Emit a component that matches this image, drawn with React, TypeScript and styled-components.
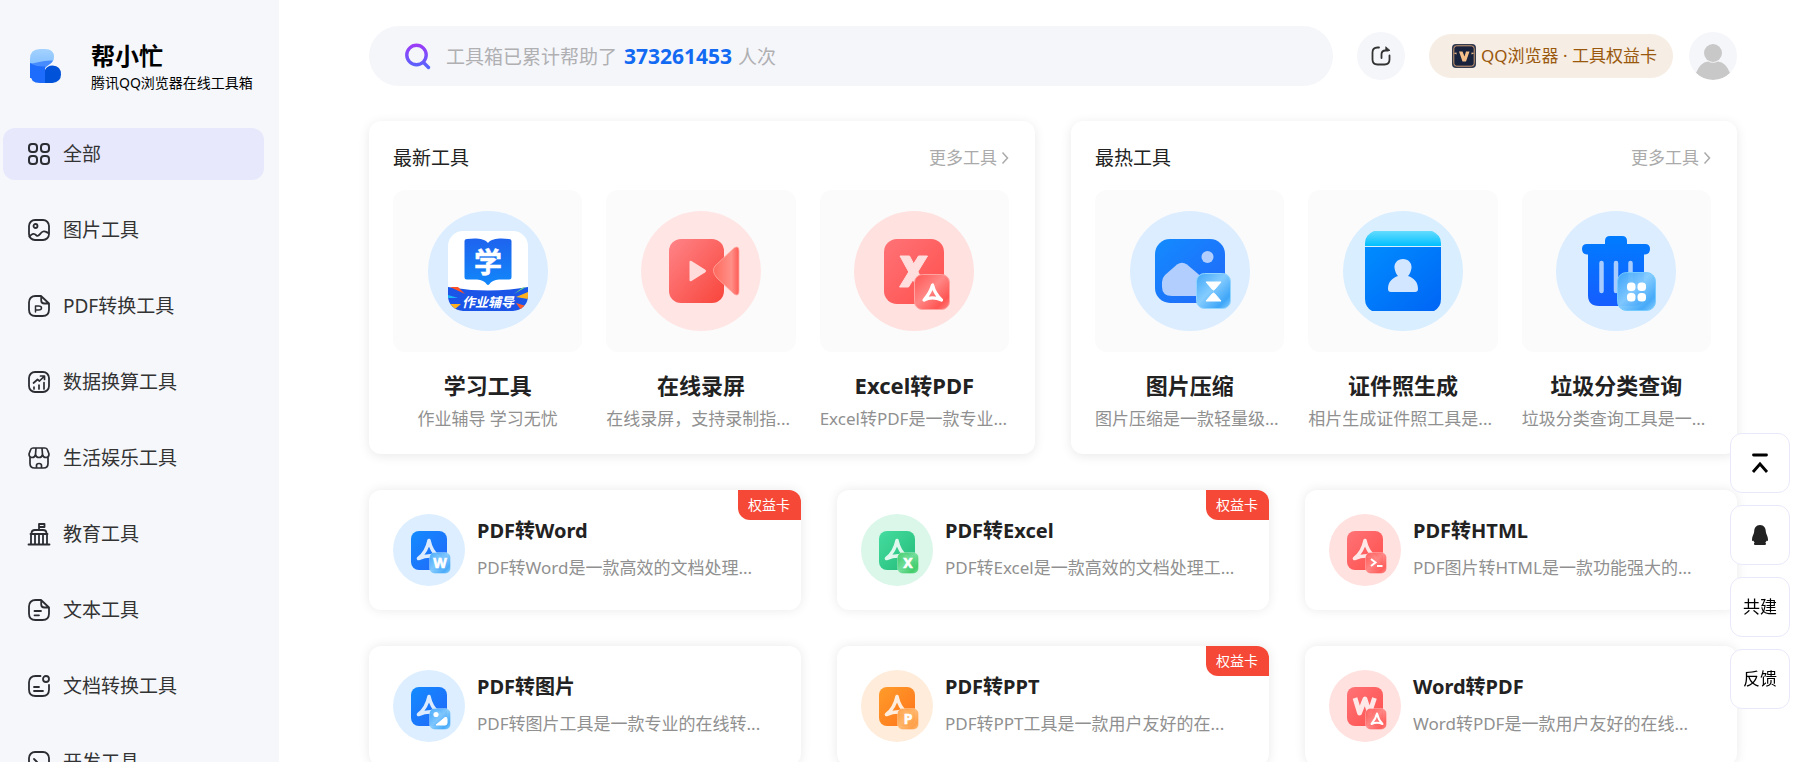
import React from "react";
import styled, { createGlobalStyle } from "styled-components";

const GlobalStyle = createGlobalStyle`
  * { box-sizing: border-box; }
  html, body { margin: 0; background: #fff; }
  body, button, input {
    font-family: "Noto Sans", "Noto Sans CJK SC", sans-serif;
    color: #222;
  }
  button { border: 0; padding: 0; background: none; cursor: pointer; }
  a { color: inherit; text-decoration: none; }
  h1, h2, h3, p, ul { margin: 0; padding: 0; }
  ul { list-style: none; }
  svg { display: block; flex: none; }
`;

const Page = styled.div`
  display: flex;
  height: 100vh;
  overflow: hidden;
`;

/* ---------- Sidebar ---------- */

const Sidebar = styled.aside`
  flex: 0 0 279px;
  background: #f5f7fb;
  overflow-y: auto;
  scrollbar-width: none;
`;

const Brand = styled.a`
  display: flex;
  align-items: center;
  gap: 28px;
  height: 128px;
  padding: 4px 0 0 28px;
  color: #000;
`;

const BrandText = styled.div`
  padding-top: 4px;
`;

const BrandName = styled.h1`
  font-size: 24px;
  line-height: 30px;
  font-weight: 700;
`;

const BrandSub = styled.p`
  font-size: 14px;
  line-height: 24px;
  white-space: nowrap;
`;

const NavList = styled.ul`
  display: flex;
  flex-direction: column;
  gap: 24px;
  padding: 0 15px 0 3px;
`;

const NavItem = styled.a<{ $active?: boolean }>`
  display: flex;
  align-items: center;
  gap: 12px;
  height: 52px;
  padding: 0 24px;
  border-radius: 12px;
  background: ${(p) => (p.$active ? "#e8e8fd" : "transparent")};
  color: #333;
  font-size: 19px;
  line-height: 28px;
`;

const LineIcon = styled.svg`
  width: 24px;
  height: 24px;
  fill: none;
  stroke: #2b2d33;
  stroke-width: 2;
  stroke-linecap: round;
  stroke-linejoin: round;
`;

/* ---------- Top bar ---------- */

const Main = styled.main`
  flex: 1;
  min-width: 0;
  padding: 26px 63px 36px 90px;
  overflow-y: auto;
  scrollbar-width: none;
`;

const TopBar = styled.header`
  display: flex;
  align-items: center;
  gap: 24px;
  margin-bottom: 35px;
`;

const SearchBox = styled.label`
  position: relative;
  flex: 1;
  display: flex;
  align-items: center;
  gap: 14px;
  height: 60px;
  padding: 0 35px;
  border-radius: 30px;
  background: #f5f6fa;
`;

const SearchInput = styled.input`
  position: absolute;
  inset: 0;
  width: 100%;
  padding: 0 78px;
  border: 0;
  border-radius: 30px;
  background: transparent;
  font-size: 19px;
  outline: none;
`;

const SearchHint = styled.span`
  font-size: 19px;
  line-height: 28px;
  color: #b0b0b3;
  white-space: pre;
`;

const Count = styled.strong`
  margin: 0 1px 0 2px;
  font-size: 21px;
  font-weight: 700;
  color: #1269f2;
`;

const RoundButton = styled.button`
  display: flex;
  align-items: center;
  justify-content: center;
  flex: none;
  width: 48px;
  height: 48px;
  border-radius: 50%;
  background: #f5f6fa;
  overflow: hidden;
`;

const Account = styled.div`
  display: flex;
  align-items: center;
  gap: 16px;
`;

const CardPill = styled.a`
  display: flex;
  align-items: center;
  gap: 5px;
  height: 44px;
  padding: 0 16px 0 23px;
  border-radius: 22px;
  background: #f6ede4;
  color: #99580c;
  font-size: 17px;
  line-height: 24px;
  white-space: nowrap;
`;

/* ---------- Cards ---------- */

const Panels = styled.div`
  display: grid;
  grid-template-columns: repeat(2, minmax(0, 1fr));
  gap: 36px;
  margin-bottom: 36px;
`;

const Panel = styled.section`
  padding: 22px 26px 20px 24px;
  border-radius: 12px;
  background: #fff;
  box-shadow: 0 2px 12px rgba(0, 0, 0, 0.09);
`;

const PanelHead = styled.div`
  display: flex;
  align-items: center;
  justify-content: space-between;
  margin-bottom: 17px;
`;

const PanelTitle = styled.h2`
  font-size: 19px;
  line-height: 30px;
  font-weight: 400;
`;

const MoreLink = styled.a`
  display: flex;
  align-items: center;
  gap: 4px;
  font-size: 17px;
  line-height: 24px;
  color: #aaa;
`;

const Tiles = styled.div`
  display: grid;
  grid-template-columns: repeat(3, minmax(0, 1fr));
  gap: 24px;
`;

const Tile = styled.a`
  display: block;
`;

const TileArt = styled.div`
  display: flex;
  align-items: center;
  justify-content: center;
  height: 162px;
  margin-bottom: 17px;
  border-radius: 12px;
  background: #fbfbfc;
`;

const TileTitle = styled.h3`
  margin-bottom: 3px;
  font-size: 22px;
  line-height: 32px;
  font-weight: 700;
  text-align: center;
`;

const Desc = styled.p<{ $centered?: boolean }>`
  font-size: 17px;
  line-height: 30px;
  color: #909090;
  white-space: nowrap;
  text-align: ${(p) => (p.$centered ? "center" : "left")};
`;

const Cards = styled.div`
  display: grid;
  grid-template-columns: repeat(3, minmax(0, 1fr));
  gap: 36px;
`;

const Card = styled.a`
  position: relative;
  display: flex;
  align-items: center;
  gap: 12px;
  height: 120px;
  padding: 0 24px;
  border-radius: 12px;
  background: #fff;
  box-shadow: 0 0 12px rgba(0, 0, 0, 0.09);
`;

const CardText = styled.div`
  display: flex;
  flex-direction: column;
  gap: 8px;
  min-width: 0;
`;

const CardTitle = styled.h3`
  font-size: 20px;
  line-height: 28px;
  font-weight: 700;
`;

const Badge = styled.span`
  position: absolute;
  top: 0;
  right: 0;
  padding: 0 11px 0 10px;
  border-radius: 0 12px 0 12px;
  background: #f54836;
  color: #fff;
  font-size: 14px;
  line-height: 30px;
`;

/* ---------- Floating actions ---------- */

const FloatBar = styled.div`
  position: fixed;
  right: 10px;
  bottom: 53px;
  display: flex;
  flex-direction: column;
  gap: 12px;
`;

const FloatButton = styled.button`
  display: flex;
  align-items: center;
  justify-content: center;
  width: 60px;
  height: 60px;
  border: 1px solid #e8e8fa;
  border-radius: 12px;
  background: #fff;
  color: #000;
  font-size: 17px;
  line-height: 24px;
`;

const ArtText = styled.text`
  font-family: "Noto Sans", "Noto Sans CJK SC", sans-serif;
  font-weight: 700;
  text-anchor: middle;
`;

/* ---------- Icons ---------- */

const DOC = "M14 2H8.500C4.500 2 2 4.500 2 8.500V15.500C2 19.500 4.500 22 8.500 22H15.500C19.500 22 22 19.500 22 15.500V9.500ZM14.200 2.500V6.500Q14.200 9.500 17.500 9.500H21.500";

const navIcons: Record<string, React.ReactNode> = {
  all: (
    <>
      <rect x="2" y="2" width="8" height="8" rx="3" />
      <rect x="14" y="2" width="8" height="8" rx="3" />
      <rect x="2" y="14" width="8" height="8" rx="3" />
      <rect x="14" y="14" width="8" height="8" rx="3" />
    </>
  ),
  image: (
    <>
      <rect x="2" y="2" width="20" height="20" rx="6" strokeWidth="1.800" />
      <circle cx="8.500" cy="8" r="2" strokeWidth="1.800" />
      <path d="M2.500 18.500C5 15.500 7 15 9.500 17.500C12 19.500 13 14.500 16 13.500C18.500 12.500 19.500 14.500 21.500 15" strokeWidth="1.800" />
    </>
  ),
  pdf: (
    <>
      <path d={DOC} strokeWidth="1.800" />
      <path d="M8.500 18V12H11.500Q14.500 12 14.500 14T11.500 16H8.500" strokeWidth="1.500" />
    </>
  ),
  data: (
    <>
      <rect x="2" y="2" width="20" height="20" rx="6" strokeWidth="1.800" />
      <path d="M7 17V19M12 15V19M17 12.500V19M6.500 13L10.500 9.500L12.500 11L17 6.500M13.500 6H17.500V9.500" strokeWidth="1.700" />
    </>
  ),
  life: (
    <path d="M3 11V17.500Q3 22 7.500 22H16.500Q21 22 21 17.500V11M6 2H18Q20 2 20.500 4L22 8Q22 11.500 19 11.500Q16 11.500 15.500 8.500Q15 11.500 12 11.500Q9 11.500 8.500 8.500Q8 11.500 5 11.500Q2 11.500 2 8L3.500 4Q4 2 6 2ZM9 2L8.500 8.500M15 2L15.500 8.500M9.500 22V19.500Q9.500 17.500 12 17.500T14.500 19.500V22" strokeWidth="1.700" />
  ),
  edu: (
    <path d="M1.500 22.500H22.500M4 22V12M20 22V12M8 22V12.500M12 22V12.500M16 22V12.500M3.500 12H20.500M4.500 11.500Q4.500 8 8 8H16Q19.500 8 19.500 11.500M12 7.500V2H17.500V5H13" strokeWidth="1.800" />
  ),
  text: (
    <>
      <path d={DOC} strokeWidth="1.800" />
      <path d="M7.500 13H14M7.500 17.300H12" strokeWidth="1.800" />
    </>
  ),
  doc: (
    <>
      <path d="M13.500 2H8.500C4.500 2 2 4.500 2 8.500V15.500C2 19.500 4.500 22 8.500 22H15.500C19.500 22 22 19.500 22 15.500V11" strokeWidth="1.800" />
      <circle cx="19" cy="5" r="3" strokeWidth="1.800" />
      <path d="M7 13H12M7 17H16" strokeWidth="1.800" />
    </>
  ),
  dev: (
    <>
      <rect x="2" y="2" width="20" height="20" rx="6" strokeWidth="1.800" />
      <path d="M7 9L10 12L7 15M12.500 16H17" strokeWidth="1.800" />
    </>
  ),
};

const Logo = () => (
  <svg width="35" height="36" viewBox="0 0 35 36">
    <defs>
      <linearGradient id="logoTop" x1="0" y1="0" x2="0" y2="1">
        <stop offset="0" stopColor="#a4d2ff" />
        <stop offset="1" stopColor="#83c0fe" />
      </linearGradient>
    </defs>
    <path d="M2 14H17V35H12Q2 35 2 25Z" fill="#1d6cfb" />
    <path d="M17 35V22Q19 17.500 24.500 17.500Q33 18 33 26.300Q33 34 24.500 35Z" fill="#0052d9" />
    <path d="M2 16V11Q2 1 12 1H17Q26 1 26 9Q26 14.500 20 17Q11 19 2 15Z" fill="url(#logoTop)" />
    <path d="M2 15.500C9 15.500 14 12 25 12.500Q23.500 15.500 20 17.500Q17.500 19 17 20.500H2Z" fill="#468cff" />
    <path d="M2 15.500Q9 19 17 18.500V30H2Z" fill="#1d6cfb" />
  </svg>
);

const palettes = {
  blue: { bg: "#dceeff", a: "#138bff", b: "#2267f8", c: "#3fa6f8", d: "#84ccff" },
  green: { bg: "#daf7e9", a: "#45dda0", b: "#24bb78", c: "#35c960", d: "#74df9b" },
  orange: { bg: "#ffecda", a: "#ff9c2a", b: "#ff741c", c: "#ff9a3f", d: "#ffb96f" },
  red: { bg: "#ffe1df", a: "#ff7377", b: "#ff4f4c", c: "#ff5553", d: "#ff8785" },
};

type Tone = keyof typeof palettes;

const Gradients = ({ id, tone }: { id: string; tone: Tone }) => {
  const c = palettes[tone];
  return (
    <defs>
      <linearGradient id={`${id}-base`} x1="0" y1="0" x2="1" y2="1">
        <stop offset="0" stopColor={c.a} />
        <stop offset="1" stopColor={c.b} />
      </linearGradient>
      <linearGradient id={`${id}-chip`} x1="0" y1="0" x2="1" y2="1">
        <stop offset="0" stopColor={c.c} />
        <stop offset="0.450" stopColor={c.d} />
        <stop offset="0.800" stopColor={c.c} />
        <stop offset="1" stopColor={c.d} />
      </linearGradient>
    </defs>
  );
};

type ToolArt = { id: string; tone: Tone; main: "pdf" | "W"; chip: "W" | "X" | "P" | "code" | "image" | "pdf" };

const ToolIcon = ({ id, tone, main, chip }: ToolArt) => (
  <svg width="72" height="72" viewBox="0 0 72 72" aria-hidden="true">
    <Gradients id={id} tone={tone} />
    <circle cx="36" cy="36" r="36" fill={palettes[tone].bg} />
    <rect x="18" y="17" width="36" height="39" rx="8" fill={`url(#${id}-base)`} />
    {main === "pdf" ? (
      <path d="M36 26.500C34.500 34 31 40 25.500 44.500C32.500 41.500 39.500 41 46 43.500C41 39.500 37.500 34 36 26.500Z" fill="none" stroke="#fff" strokeOpacity="0.850" strokeWidth="3.600" strokeLinejoin="round" />
    ) : (
      <path d="M26 28L30.500 43L36 29L40.500 43L45.500 28" fill="none" stroke="#fff" strokeOpacity="0.850" strokeWidth="4.800" strokeLinejoin="round" />
    )}
    <rect x="36.500" y="38.500" width="21" height="21" rx="5" fill={`url(#${id}-chip)`} fillOpacity="0.930" stroke="#fff" strokeOpacity="0.250" />
    {(chip === "W" || chip === "X" || chip === "P") && (
      <ArtText x="47" y="54" fontSize="14" fill="#fff" stroke="#fff" strokeWidth="0.600">{chip}</ArtText>
    )}
    {chip === "code" && <path d="M42 45L46.500 48.500L42 52M48 52H53.500" fill="none" stroke="#fff" strokeWidth="2" />}
    {chip === "image" && (
      <>
        <circle cx="43" cy="44.500" r="2.600" fill="#fff" />
        <path d="M43 55L52 47.500Q54 46.500 54 49V53Q54 55 52 55Z" fill="#fff" stroke="#fff" strokeLinejoin="round" />
      </>
    )}
    {chip === "pdf" && (
      <path d="M48 43.500C47 48 45 51 42.500 54C46 52.500 50 52.500 53.500 54C50.500 51 49 48 48 43.500Z" fill="none" stroke="#fff" strokeWidth="2" strokeLinejoin="round" />
    )}
  </svg>
);

const StudyArt = () => (
  <svg width="120" height="120" viewBox="0 0 120 120" aria-hidden="true">
    <defs>
      <clipPath id="studyClip"><rect x="20" y="20" width="80" height="80" rx="15" /></clipPath>
      <linearGradient id="studyBook" x1="0" y1="0" x2="0" y2="1">
        <stop offset="0" stopColor="#1e63ee" />
        <stop offset="1" stopColor="#1187fa" />
      </linearGradient>
    </defs>
    <circle cx="60" cy="60" r="60" fill="#dbedff" />
    <g clipPath="url(#studyClip)">
      <rect x="20" y="20" width="80" height="80" fill="#fff" />
      <path d="M36.500 30Q36.500 28 39 28C47 27 56 27 60 32C64 27 73 27 81 28Q83.500 28 83.500 30V66Q83.500 68.500 81 68.500H71Q64 69 61.500 73Q60 75 58.500 73Q56 69 49 68.500H39Q36.500 68.500 36.500 66Z" fill="url(#studyBook)" />
      <path d="M20 76Q60 83 100 76V100H20Z" fill="#1a55e8" />
      <path d="M22 76H30L37 83Z" fill="#ff5124" />
      <path d="M20 84L30 87L20 87Z" fill="#19b8f5" />
      <path d="M22 93L33 93L27 98ZM88 86L100 81V88Z" fill="#ffb01f" />
      <path d="M88 92L98 95L93 99Z" fill="#ff5a2a" />
      <path d="M94 77L98 76L86 83Z" fill="#76e36c" />
      <ArtText x="60" y="62" fontSize="28" fill="#fff" stroke="#fff" strokeWidth="0.500">学</ArtText>
      <ArtText x="60" y="96" fontSize="13" fill="#fff" fontStyle="italic">作业辅导</ArtText>
    </g>
  </svg>
);

const RecordArt = () => (
  <svg width="120" height="120" viewBox="0 0 120 120" aria-hidden="true">
    <defs>
      <linearGradient id="recBody" x1="0" y1="0" x2="1" y2="1">
        <stop offset="0" stopColor="#ff8488" />
        <stop offset="1" stopColor="#f8453b" />
      </linearGradient>
      <linearGradient id="recLens" x1="0" y1="0" x2="1" y2="0">
        <stop offset="0" stopColor="#ff6a5e" />
        <stop offset="0.700" stopColor="#ff9088" />
        <stop offset="1" stopColor="#ff5b55" />
      </linearGradient>
    </defs>
    <circle cx="60" cy="60" r="60" fill="#ffe6e5" />
    <rect x="28" y="28" width="55" height="64" rx="12" fill="url(#recBody)" />
    <path d="M48.500 51V69Q48.500 71 50.500 70L64 61.500Q66 60 64 58.500L50.500 50Q48.500 49 48.500 51Z" fill="#ffdcdb" />
    <path d="M74 55L93 37Q98 34 98 40V80Q98 86 93 83L76 67Q70 60 74 55Z" fill="url(#recLens)" stroke="#ffa8a1" strokeWidth="0.800" />
  </svg>
);

const ExcelArt = () => (
  <svg width="120" height="120" viewBox="0 0 120 120" aria-hidden="true">
    <Gradients id="bigExcel" tone="red" />
    <circle cx="60" cy="60" r="60" fill="#ffe1df" />
    <rect x="30" y="28" width="60" height="65" rx="13" fill="url(#bigExcel-base)" />
    <path d="M46 45H55.500L72 76H63ZM64.500 45H73.500L54.500 76H45.500Z" fill="#ffdedd" stroke="#ffdedd" strokeLinejoin="round" />
    <rect x="60.500" y="63.500" width="35" height="35" rx="8" fill="url(#bigExcel-chip)" stroke="#ffa3a0" />
    <path d="M78.500 74C77 80 74 84.500 70 89C75 86.500 82 86.500 87.500 89C82.500 84.500 80 80 78.500 74Z" fill="none" stroke="#fff" strokeWidth="3.200" strokeLinejoin="round" />
  </svg>
);

const CompressArt = () => (
  <svg width="120" height="120" viewBox="0 0 120 120" aria-hidden="true">
    <Gradients id="bigImage" tone="blue" />
    <circle cx="60" cy="60" r="60" fill="#dbedff" />
    <rect x="25" y="28" width="70" height="64" rx="15" fill="url(#bigImage-base)" />
    <circle cx="77.500" cy="46" r="6" fill="#b1cefe" />
    <path d="M32 71Q32 67 35 64L47 53.500Q52 50 57 53.500L80 73V85H42Q32 85 32 76Z" fill="#b1cefe" />
    <rect x="66.500" y="62.500" width="34" height="35" rx="8" fill="url(#bigImage-chip)" stroke="#91d5ff" />
    <path d="M76 71H91L84.500 78.500Q83.500 79.500 82.500 78.500ZM76 90H91L84.500 82.500Q83.500 81.500 82.500 82.500Z" fill="#fff" stroke="#fff" strokeLinejoin="round" />
  </svg>
);

const IdPhotoArt = () => (
  <svg width="120" height="120" viewBox="0 0 120 120" aria-hidden="true">
    <defs>
      <linearGradient id="idTop" x1="0" y1="0" x2="0" y2="1">
        <stop offset="0" stopColor="#65dcff" />
        <stop offset="1" stopColor="#00bfff" />
      </linearGradient>
      <linearGradient id="idBody" x1="0" y1="0" x2="1" y2="1">
        <stop offset="0" stopColor="#008cff" />
        <stop offset="1" stopColor="#0065f5" />
      </linearGradient>
    </defs>
    <circle cx="60" cy="60" r="60" fill="#d9eeff" />
    <path d="M22 35V32Q22 24 31 20H89Q98 24 98 32V35Z" fill="url(#idTop)" />
    <path d="M22 36H98V88Q98 96 91 100H29Q22 96 22 88Z" fill="url(#idBody)" />
    <path d="M60 48C54.500 48 51 52 51.500 57C52 61 54 64 55 65C49 67 45 71 45 78Q45 81 48 81H72Q75 81 75 78C75 71 71 67 65 65C66 64 68 61 68.500 57C69 52 65.500 48 60 48Z" fill="#d2e6ff" />
  </svg>
);

const TrashArt = () => (
  <svg width="120" height="120" viewBox="0 0 120 120" aria-hidden="true">
    <Gradients id="bigTrash" tone="blue" />
    <defs>
      <linearGradient id="trashCan" x1="0" y1="0" x2="0" y2="1">
        <stop offset="0" stopColor="#007cff" />
        <stop offset="1" stopColor="#165dff" />
      </linearGradient>
    </defs>
    <circle cx="60" cy="60" r="60" fill="#dbedff" />
    <path d="M49 33V30Q49 25 54 25H66Q71 25 71 30V33H89Q94 33 94 38T89 43.500H88V84Q88 95 77 95H43Q32 95 32 84V43.500H31Q26 43 26 38T31 33Z" fill="url(#trashCan)" />
    <path d="M45.500 52V80M60 52V80M74.500 52V80" stroke="#a9ccff" strokeWidth="4.500" strokeLinecap="round" />
    <rect x="61.500" y="61.500" width="38" height="38" rx="9" fill="url(#bigTrash-chip)" fillOpacity="0.950" stroke="#75caff" />
    <g fill="#fff">
      <rect x="71" y="71.500" width="8.500" height="8.500" rx="3.500" />
      <rect x="81.500" y="71.500" width="8.500" height="8.500" rx="3.500" />
      <rect x="71" y="82" width="8.500" height="8.500" rx="3.500" />
      <rect x="81.500" y="82" width="8.500" height="8.500" rx="3.500" />
    </g>
  </svg>
);

const Chevron = () => (
  <svg width="8" height="14" viewBox="0 0 8 14" fill="none" stroke="#aaa" strokeWidth="1.500" aria-hidden="true">
    <path d="M1.500 1.500L6.500 7L1.500 12.500" />
  </svg>
);

/* ---------- Data ---------- */

const nav = [
  ["all", "全部"],
  ["image", "图片工具"],
  ["pdf", "PDF转换工具"],
  ["data", "数据换算工具"],
  ["life", "生活娱乐工具"],
  ["edu", "教育工具"],
  ["text", "文本工具"],
  ["doc", "文档转换工具"],
  ["dev", "开发工具"],
];

const panels = [
  {
    title: "最新工具",
    tools: [
      { name: "学习工具", desc: "作业辅导 学习无忧", art: <StudyArt />, centered: true },
      { name: "在线录屏", desc: "在线录屏，支持录制指...", art: <RecordArt /> },
      { name: "Excel转PDF", desc: "Excel转PDF是一款专业...", art: <ExcelArt /> },
    ],
  },
  {
    title: "最热工具",
    tools: [
      { name: "图片压缩", desc: "图片压缩是一款轻量级...", art: <CompressArt /> },
      { name: "证件照生成", desc: "相片生成证件照工具是...", art: <IdPhotoArt /> },
      { name: "垃圾分类查询", desc: "垃圾分类查询工具是一...", art: <TrashArt /> },
    ],
  },
];

const cards: { name: string; desc: string; vip?: boolean; art: ToolArt }[] = [
  { name: "PDF转Word", desc: "PDF转Word是一款高效的文档处理...", vip: true, art: { id: "pdf-word", tone: "blue", main: "pdf", chip: "W" } },
  { name: "PDF转Excel", desc: "PDF转Excel是一款高效的文档处理工...", vip: true, art: { id: "pdf-excel", tone: "green", main: "pdf", chip: "X" } },
  { name: "PDF转HTML", desc: "PDF图片转HTML是一款功能强大的...", art: { id: "pdf-html", tone: "red", main: "pdf", chip: "code" } },
  { name: "PDF转图片", desc: "PDF转图片工具是一款专业的在线转...", art: { id: "pdf-image", tone: "blue", main: "pdf", chip: "image" } },
  { name: "PDF转PPT", desc: "PDF转PPT工具是一款用户友好的在...", vip: true, art: { id: "pdf-ppt", tone: "orange", main: "pdf", chip: "P" } },
  { name: "Word转PDF", desc: "Word转PDF是一款用户友好的在线...", art: { id: "word-pdf", tone: "red", main: "W", chip: "pdf" } },
];

export default function App() {
  return (
    <Page>
      <GlobalStyle />
      <Sidebar>
        <Brand href="#">
          <Logo />
          <BrandText>
            <BrandName>帮小忙</BrandName>
            <BrandSub>腾讯QQ浏览器在线工具箱</BrandSub>
          </BrandText>
        </Brand>
        <nav>
          <NavList>
            {nav.map(([icon, label], i) => (
              <li key={icon}>
                <NavItem href="#" $active={i === 0}>
                  <LineIcon viewBox="0 0 24 24" aria-hidden="true">{navIcons[icon]}</LineIcon>
                  {label}
                </NavItem>
              </li>
            ))}
          </NavList>
        </nav>
      </Sidebar>

      <Main>
        <TopBar>
          <SearchBox>
            <svg width="28" height="28" viewBox="0 0 28 28" fill="none" aria-hidden="true">
              <defs>
                <linearGradient id="searchStroke" x1="14" y1="0" x2="14" y2="28" gradientUnits="userSpaceOnUse">
                  <stop offset="0" stopColor="#a537f5" />
                  <stop offset="1" stopColor="#4e68ff" />
                </linearGradient>
              </defs>
              <circle cx="12.500" cy="13" r="9.700" stroke="url(#searchStroke)" strokeWidth="3.400" />
              <path d="M19.500 20.500L24.500 25.500" stroke="url(#searchStroke)" strokeWidth="3.400" strokeLinecap="round" />
            </svg>
            <SearchHint>工具箱已累计帮助了 <Count>373261453</Count> 人次</SearchHint>
            <SearchInput type="text" aria-label="搜索工具" />
          </SearchBox>
          <RoundButton aria-label="分享">
            <svg width="22" height="22" viewBox="0 0 22 22" fill="none" stroke="#333" strokeWidth="1.800" strokeLinecap="round" strokeLinejoin="round" aria-hidden="true">
              <path d="M9 2.500H7.500Q2.500 2.500 2.500 7.500V14.500Q2.500 19.500 7.500 19.500H14.500Q19.500 19.500 19.500 14.500V10.500M11.500 13V9.500Q11.500 5.500 15.500 5.500H18" />
              <path d="M16 2L20 5.500H16Z" fill="#333" strokeWidth="0.800" />
            </svg>
          </RoundButton>
          <Account>
            <CardPill href="#">
              <svg width="24" height="24" viewBox="0 0 24 24" aria-hidden="true">
                <rect x="0" y="0" width="24" height="24" rx="4" fill="#343a50" />
                <rect x="1.800" y="1.800" width="20.400" height="20.400" rx="3" fill="#18223d" stroke="#cb9c70" />
                <path d="M1.500 9L4.500 8.500V10.500ZM22.500 9L19.500 8.500V10.500Z" fill="#f2bf8e" />
                <path d="M7 7.500H10.500L12.500 12.500L14 7.500H17.500L14 17.500H10.500Z" fill="#f6bf89" />
              </svg>
              QQ浏览器 · 工具权益卡
            </CardPill>
            <RoundButton aria-label="账号">
              <svg width="48" height="48" viewBox="0 0 48 48" fill="#c8c8c8" aria-hidden="true">
                <circle cx="24" cy="21" r="9" />
                <path d="M7 41Q11 30.500 19 29.500Q24 32 29 29.500Q37 30.500 41 41Q34 48 24 48T7 41Z" />
              </svg>
            </RoundButton>
          </Account>
        </TopBar>

        <Panels>
          {panels.map((panel) => (
            <Panel key={panel.title}>
              <PanelHead>
                <PanelTitle>{panel.title}</PanelTitle>
                <MoreLink href="#">
                  更多工具
                  <Chevron />
                </MoreLink>
              </PanelHead>
              <Tiles>
                {panel.tools.map((tool) => (
                  <Tile href="#" key={tool.name}>
                    <TileArt>{tool.art}</TileArt>
                    <TileTitle>{tool.name}</TileTitle>
                    <Desc $centered={"centered" in tool}>{tool.desc}</Desc>
                  </Tile>
                ))}
              </Tiles>
            </Panel>
          ))}
        </Panels>

        <Cards>
          {cards.map((card) => (
            <Card href="#" key={card.name}>
              <ToolIcon {...card.art} />
              <CardText>
                <CardTitle>{card.name}</CardTitle>
                <Desc>{card.desc}</Desc>
              </CardText>
              {card.vip && <Badge>权益卡</Badge>}
            </Card>
          ))}
        </Cards>
      </Main>

      <FloatBar>
        <FloatButton aria-label="返回顶部">
          <svg width="18" height="22" viewBox="0 0 18 22" fill="none" stroke="#000" strokeWidth="2.800" aria-hidden="true">
            <path d="M2.500 3H15.500" strokeLinecap="round" />
            <path d="M2 20L9 12L16 20" />
          </svg>
        </FloatButton>
        <FloatButton aria-label="QQ">
          <svg width="18" height="22" viewBox="0 0 18 22" fill="#222" aria-hidden="true">
            <path d="M9 1C5 1 3.200 4 3.200 7.500C3 10 1 12.500 1 15.500C1 17 1.600 17.500 2.500 16.500C2.700 17.500 3 18 3.700 18.500C2.800 19 2.500 21 4.500 21H13.500C15.500 21 15.200 19 14.300 18.500C15 18 15.300 17.500 15.500 16.500C16.400 17.500 17 17 17 15.500C17 12.500 15 10 14.800 7.500C14.800 4 13 1 9 1Z" />
          </svg>
        </FloatButton>
        <FloatButton>共建</FloatButton>
        <FloatButton>反馈</FloatButton>
      </FloatBar>
    </Page>
  );
}
